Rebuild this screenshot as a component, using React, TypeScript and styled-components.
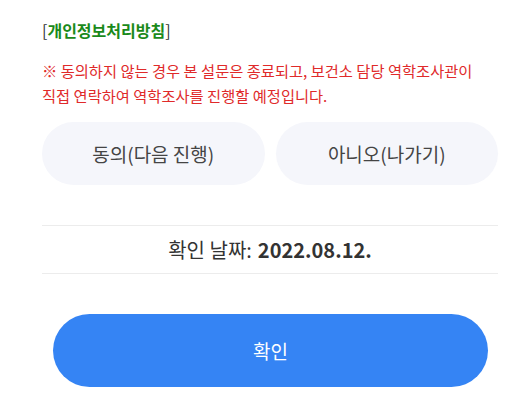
import React from 'react';
import styled, { createGlobalStyle } from 'styled-components';

const GlobalStyle = createGlobalStyle`
  body {
    margin: 0;
    background: #ffffff;
    font-family: "Noto Sans CJK KR", "Noto Sans", sans-serif;
  }
`;

const Page = styled.div`
  display: flex;
  flex-direction: column;
  padding: 18px 34px 0 42px;
`;

const Title = styled.div`
  font-size: 16px;
  line-height: 24px;
  color: #333333;
`;

const TitleStrong = styled.strong`
  color: #1a8a1a;
  font-weight: 700;
`;

const Notice = styled.p`
  margin: 16px 0 0;
  font-size: 15.3px;
  line-height: 25px;
  color: #e02a2a;
`;

const ChoiceRow = styled.div`
  display: grid;
  grid-template-columns: 1fr 1fr;
  gap: 11px;
  margin-top: 14px;
`;

const ChoiceButton = styled.button`
  height: 63px;
  border: none;
  border-radius: 32px;
  background: #f5f6fb;
  color: #444444;
  font-family: inherit;
  font-size: 19px;
  cursor: pointer;
`;

const DateRow = styled.div`
  display: flex;
  justify-content: center;
  align-items: center;
  height: 47px;
  margin-top: 40px;
  border-top: 1px solid #ececec;
  border-bottom: 1px solid #ececec;
  font-size: 20px;
  color: #333333;
`;

const DateValue = styled.strong`
  margin-left: 6px;
  font-weight: 700;
`;

const ConfirmButton = styled.button`
  height: 73px;
  margin: 40px 10px 0 11px;
  border: none;
  border-radius: 37px;
  background: #3584f4;
  color: #ffffff;
  font-family: inherit;
  font-size: 19px;
  cursor: pointer;
`;

const App = () => {
  return (
    <>
      <GlobalStyle />
      <Page>
        <Title>
          [<TitleStrong>개인정보처리방침</TitleStrong>]
        </Title>
        <Notice>
          ※ 동의하지 않는 경우 본 설문은 종료되고, 보건소 담당 역학조사관이
          <br />
          직접 연락하여 역학조사를 진행할 예정입니다.
        </Notice>
        <ChoiceRow>
          <ChoiceButton>동의(다음 진행)</ChoiceButton>
          <ChoiceButton>아니오(나가기)</ChoiceButton>
        </ChoiceRow>
        <DateRow>
          확인 날짜:<DateValue>2022.08.12.</DateValue>
        </DateRow>
        <ConfirmButton>확인</ConfirmButton>
      </Page>
    </>
  );
};

export default App;
